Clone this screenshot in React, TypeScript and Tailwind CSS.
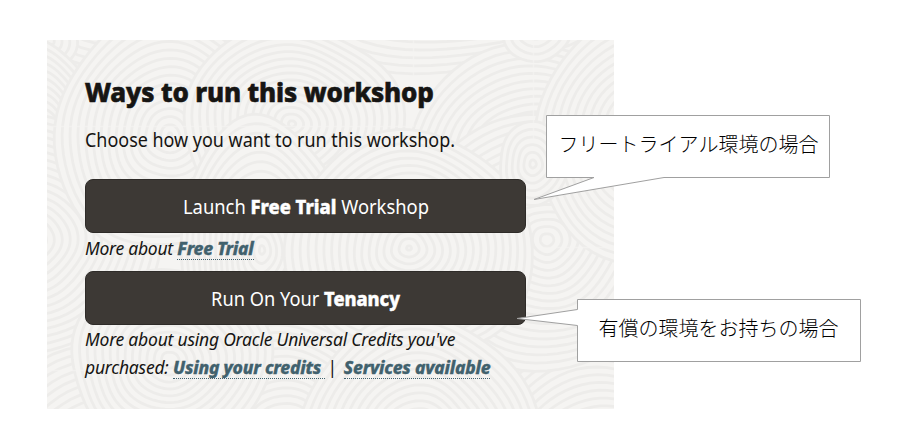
import React from "react";

type Swirl = { x: number; y: number; r: number; phase: number; sx?: number; sy?: number };

// Overlapping ripples, listed from back to front, in card coordinates.
const swirls: Swirl[] = [
  { x: 560, y: 440, r: 150, phase: 1.9 },
  { x: 80, y: -90, r: 150, phase: 1 },
  { x: 400, y: -95, r: 130, phase: 1, sx: 1.5 },
  { x: 490, y: 130, r: 128, phase: 2.6 },
  { x: 500, y: 200, r: 128, phase: 2.9, sx: 1.05 },
  { x: 610, y: 100, r: 124, phase: 1.4 },
  { x: 0, y: 0, r: 30, phase: 0 },
  { x: 489, y: -12, r: 34, phase: 1 },
  { x: -5, y: 120, r: 120, phase: 2, sx: 0.5 },
  { x: -15, y: 200, r: 128, phase: 2.2 },
  { x: 123, y: 95, r: 116, phase: 0.4, sy: 1.05 },
  { x: 245, y: 84, r: 110, phase: 1.7, sy: 0.9 },
  { x: 215, y: 210, r: 110, phase: 1.2, sx: 0.75, sy: 1.2 },
  { x: 362, y: 208, r: 124, phase: 0.2, sy: 0.92 },
  { x: 486, y: 124, r: 42, phase: 1, sx: 0.8 },
  { x: 60, y: 460, r: 150, phase: 0.3 },
  { x: 240, y: 400, r: 120, phase: 1.3 },
  { x: 123, y: 320, r: 100, phase: 2, sy: 0.9 },
  { x: 372, y: 400, r: 122, phase: 0.5 },
];

function ringPath(s: Swirl, radius: number) {
  const points: string[] = [];
  for (let i = 0; i < 72; i++) {
    const a = (i / 72) * Math.PI * 2;
    const d = radius * (1 + 0.03 * Math.sin(3 * a + s.phase) + 0.015 * Math.sin(5 * a + radius / 30));
    points.push(`${(s.x + (s.sx ?? 1) * d * Math.cos(a)).toFixed(1)},${(s.y + (s.sy ?? 1) * d * Math.sin(a)).toFixed(1)}`);
  }
  return `M${points.join("L")}Z`;
}

function Ripples() {
  return (
    <svg className="absolute inset-0" width="567" height="369" viewBox="0 0 567 369" aria-hidden="true">
      {swirls.map((s, i) => {
        const radii: number[] = [];
        for (let r = s.r; r > 2; r -= 7.6) radii.push(r);
        return (
          <g key={i} fill="#f5f4f2" stroke="#edecea" strokeWidth="2.8">
            {radii.map((r) => (
              <path key={r} d={ringPath(s, r)} />
            ))}
          </g>
        );
      })}
      <g stroke="#f5f4f2" strokeWidth="1.5" opacity="0.7">
        <path d="M0 86.5H365M366.5 0V87M486.5 0V100M490 207.5H567M0 330.5H90" />
      </g>
    </svg>
  );
}

const link =
  "inline-block border-b border-dotted border-[#41616d] leading-[22px] font-extrabold text-[#41616d] [-webkit-text-stroke:0.35px_#41616d]";
const button =
  "flex h-[54px] w-[441px] items-center justify-center rounded-lg border border-[#2e2b28] bg-[#3d3935] pt-px text-[20px] text-white";
const strong = "font-extrabold [-webkit-text-stroke:0.5px_white]";

export default function App() {
  return (
    <main className="relative h-[441px] w-[915px] overflow-hidden bg-white pt-10 pl-[47px] font-['Noto_Sans',sans-serif] text-[#161513]">
      <section className="relative h-[369px] w-[567px] overflow-hidden bg-[#f5f4f2]">
        <Ripples />
        <div className="relative flex flex-col items-start pt-[34px] pl-[38px] whitespace-nowrap">
          <h1 className="text-[26px] leading-9 font-extrabold tracking-[-0.14px] [-webkit-text-stroke:0.6px_#161513]">
            Ways to run this workshop
          </h1>
          <p className="mt-3 origin-left scale-x-[0.897] text-[20px] leading-9">Choose how you want to run this workshop.</p>
          <button className={`${button} mt-[21px]`}>
            <span className="scale-x-[0.918]">
              Launch <b className={strong}>Free Trial</b> Workshop
            </span>
          </button>
          <p className="mt-px text-[17.5px] leading-[28px] tracking-[-0.24px] italic">
            More about <a className={link}>Free Trial</a>
          </p>
          <button className={`${button} mt-[9px]`}>
            <span className="scale-x-[0.912]">
              Run On Your <b className={strong}>Tenancy</b>
            </span>
          </button>
          <div className="text-[17.5px] leading-[28px] tracking-[-0.22px] italic">
            <p>More about using Oracle Universal Credits you've</p>
            <p>
              purchased: <a className={link}>Using your credits&nbsp;</a>
              <span className="mr-[7px] ml-[2px] not-italic">|</span>
              <a className={link}>Services available</a>
            </p>
          </div>
        </div>
      </section>

      <svg className="absolute inset-0" width="915" height="441" viewBox="0 0 915 441" fill="white" stroke="#a0a0a0" aria-hidden="true">
        <path d="M546.5 115.5H829.5V177.5H664L534 199.5L594 177.5H546.5Z" />
        <path d="M577.5 299.5H860.5V361.5H577.5V325.5L517 318.5L577.5 309.5Z" />
      </svg>
      <div className="absolute top-[114px] left-[547px] flex h-[60px] w-[283px] items-center justify-center font-['Noto_Sans_CJK_JP',sans-serif] text-[20px] font-light whitespace-nowrap text-black">
        フリートライアル環境の場合
      </div>
      <div className="absolute top-[298px] left-[577px] flex h-[60px] w-[283px] items-center justify-center font-['Noto_Sans_CJK_JP',sans-serif] text-[20px] font-light whitespace-nowrap text-black">
        有償の環境をお持ちの場合
      </div>
    </main>
  );
}
